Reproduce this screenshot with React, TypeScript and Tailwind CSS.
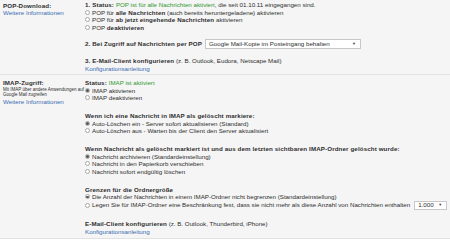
import { type JSX } from 'react'

const Radio = ({ checked = false }: { checked?: boolean }): JSX.Element => (
  <span className="flex h-[5px] w-[5px] shrink-0 items-center justify-center rounded-full border-[0.5px] border-[#a8a8a8] bg-white">
    {checked && <span className="h-[2.5px] w-[2.5px] rounded-full bg-[#555]" />}
  </span>
)

const Option = ({ checked, children }: { checked?: boolean; children: React.ReactNode }) => (
  <div className="flex h-[7.5px] items-center gap-[2px] whitespace-nowrap">
    <Radio checked={checked} />
    <span>{children}</span>
  </div>
)

const Select = ({ label, className }: { label: string; className: string }) => (
  <div
    className={`flex items-center justify-between border-[0.5px] border-[#c8c8c8] bg-white pl-[3px] pr-[4px] ${className}`}
  >
    <span className="truncate">{label}</span>
    <span className="text-[4px] text-[#444]">▼</span>
  </div>
)

const Link = ({ children }: { children: React.ReactNode }) => (
  <div className="h-[7.5px] text-[#3b6cb4]">{children}</div>
)

export default function App(): JSX.Element {
  return (
    <div className="h-[239px] w-[450px] overflow-hidden bg-[#f5f5f5] font-['Liberation_Sans',Arial,sans-serif] text-[6.2px] leading-[7.5px] text-[#2e2e2e] [&_b]:tracking-[0.12px]">
      {/* POP-Download */}
      <div className="flex border-b border-[#e2e2e2] pt-[1px] pb-[1.5px]">
        <div className="w-[85px] shrink-0 pl-[3px] pt-[0.5px]">
          <div className="h-[7.5px] font-bold tracking-[0.12px]">POP-Download:</div>
          <Link>Weitere Informationen</Link>
        </div>
        <div className="flex flex-col gap-[8px]">
          <div>
            <div className="h-[7.5px] whitespace-nowrap">
              <b>1. Status: </b>
              <span className="text-[#2f9a2f]">POP ist für alle Nachrichten aktiviert</span>, die seit
              01.10.11 eingegangen sind.
            </div>
            <Option>
              POP für <b>alle Nachrichten</b> (auch bereits heruntergeladene) aktivieren
            </Option>
            <Option>
              POP für <b>ab jetzt eingehende Nachrichten</b> aktivieren
            </Option>
            <Option>
              POP <b>deaktivieren</b>
            </Option>
          </div>
          <div className="flex h-[10px] items-center gap-[3px] whitespace-nowrap">
            <b>2. Bei Zugriff auf Nachrichten per POP</b>
            <Select label="Google Mail-Kopie im Posteingang behalten" className="h-[10px] w-[156px]" />
          </div>
          <div>
            <div className="h-[7.5px] whitespace-nowrap">
              <b>3. E-Mail-Client konfigurieren</b> (z. B. Outlook, Eudora, Netscape Mail)
            </div>
            <Link>Konfigurationsanleitung</Link>
          </div>
        </div>
      </div>

      {/* IMAP-Zugriff */}
      <div className="flex border-b border-[#e2e2e2] pt-[4.5px] pb-[2.5px]">
        <div className="w-[85px] shrink-0 pl-[3px]">
          <div className="h-[7.5px] font-bold tracking-[0.12px]">IMAP-Zugriff:</div>
          <div className="text-[4.5px] leading-[5.5px]">
            Mit IMAP über andere Anwendungen auf
            <br />
            Google Mail zugreifen
          </div>
          <Link>Weitere Informationen</Link>
        </div>
        <div className="flex flex-col gap-[10.5px]">
          <div>
            <div className="h-[7.5px] whitespace-nowrap">
              <b>Status: </b>
              <span className="text-[#2f9a2f]">IMAP ist aktiviert</span>
            </div>
            <Option checked>IMAP aktivieren</Option>
            <Option>IMAP deaktivieren</Option>
          </div>
          <div>
            <div className="h-[7.5px] font-bold tracking-[0.12px] whitespace-nowrap">
              Wenn ich eine Nachricht in IMAP als gelöscht markiere:
            </div>
            <Option checked>Auto-Löschen ein - Server sofort aktualisieren (Standard)</Option>
            <Option>Auto-Löschen aus - Warten bis der Client den Server aktualisiert</Option>
          </div>
          <div>
            <div className="h-[7.5px] font-bold tracking-[0.12px] whitespace-nowrap">
              Wenn Nachricht als gelöscht markiert ist und aus dem letzten sichtbaren IMAP-Ordner
              gelöscht wurde:
            </div>
            <Option checked>Nachricht archivieren (Standardeinstellung)</Option>
            <Option>Nachricht in den Papierkorb verschieben</Option>
            <Option>Nachricht sofort endgültig löschen</Option>
          </div>
          <div>
            <div className="h-[7.5px] font-bold tracking-[0.12px] whitespace-nowrap">
              Grenzen für die Ordnergröße
            </div>
            <Option checked>
              Die Anzahl der Nachrichten in einem IMAP-Ordner nicht begrenzen (Standardeinstellung)
            </Option>
            <div className="flex h-[9px] items-center gap-[2px] whitespace-nowrap">
              <Radio />
              <span>
                Legen Sie für IMAP-Ordner eine Beschränkung fest, dass sie nicht mehr als diese
                Anzahl von Nachrichten enthalten
              </span>
              <Select label="1.000" className="ml-[2px] h-[9px] w-[33px]" />
            </div>
          </div>
          <div>
            <div className="h-[7.5px] whitespace-nowrap">
              <b>E-Mail-Client konfigurieren</b> (z. B. Outlook, Thunderbird, iPhone)
            </div>
            <Link>Konfigurationsanleitung</Link>
          </div>
        </div>
      </div>
    </div>
  )
}
